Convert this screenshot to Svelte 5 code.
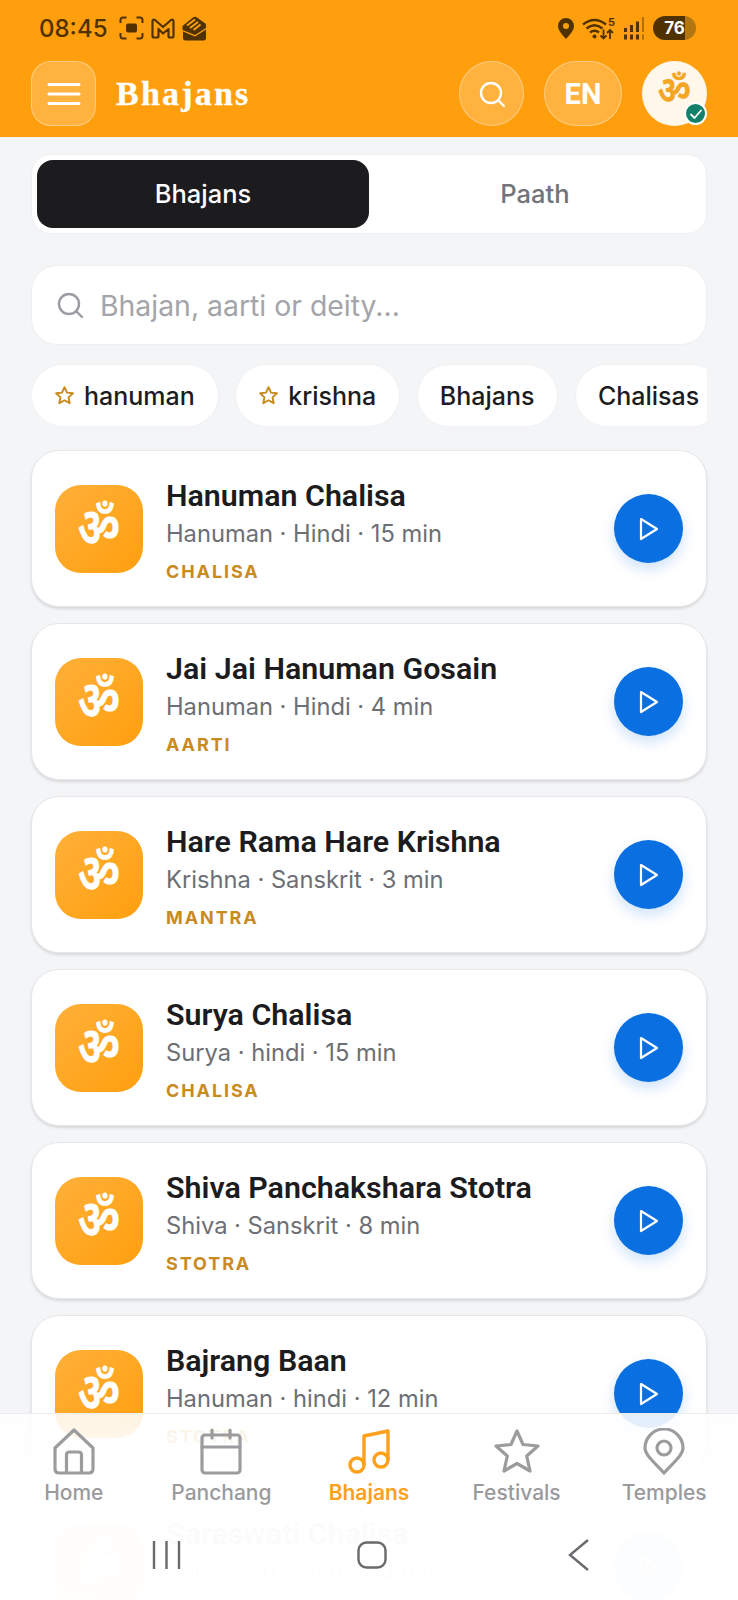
<script>
  const chips = [
    { label: "hanuman", star: true },
    { label: "krishna", star: true },
    { label: "Bhajans", star: false },
    { label: "Chalisas", star: false },
  ];
  // last card runs off the bottom of the screen, its tag line never shows
  const tracks = [
    { title: "Hanuman Chalisa", meta: "Hanuman · Hindi · 15 min", tag: "CHALISA" },
    { title: "Jai Jai Hanuman Gosain", meta: "Hanuman · Hindi · 4 min", tag: "AARTI" },
    { title: "Hare Rama Hare Krishna", meta: "Krishna · Sanskrit · 3 min", tag: "MANTRA" },
    { title: "Surya Chalisa", meta: "Surya · hindi · 15 min", tag: "CHALISA" },
    { title: "Shiva Panchakshara Stotra", meta: "Shiva · Sanskrit · 8 min", tag: "STOTRA" },
    { title: "Bajrang Baan", meta: "Hanuman · hindi · 12 min", tag: "STOTRA" },
    { title: "Saraswati Chalisa", meta: "Saraswati · hindi · 10 min", tag: "" },
  ];
  const tabs = ["Home", "Panchang", "Bhajans", "Festivals", "Temples"];
</script>

<div class="screen">
  <header class="top">
    <div class="status">
      <div class="status-left">
        <span class="clock">08:45</span>
        <svg width="25" height="24" viewBox="0 0 25 24" fill="none" stroke="#4f3200" stroke-width="2"><path d="M1.500 7V4Q1.500 1.500 4 1.500H7.500M17.500 1.500H21Q23.500 1.500 23.500 4V7M23.500 17v3Q23.500 22.500 21 22.500H17.500M7.500 22.500H4Q1.500 22.500 1.500 20V17"/><rect x="7" y="7.500" width="11" height="9" rx="2" fill="#4f3200" stroke="none"/></svg>
        <svg width="24" height="21" viewBox="0 0 24 21" fill="none" stroke="#4f3200" stroke-width="2.200" stroke-linejoin="round"><path d="M1.500 18V3.500Q1.500 1 4 2l8 7 8-7q2.500-1 2.500 1.500V18q0 1.500-1.500 1.500h-2q-1.500 0-1.500-1.500v-7L12 15.500 7.500 11v7q0 1.500-1.500 1.500H3Q1.500 19.500 1.500 18z"/></svg>
        <svg width="25" height="25" viewBox="0 0 25 25" fill="#4f3200"><path d="M0.500 10 11 1.500q2-1.500 4 0l9 6.500v4L13 19 0.500 14z"/><path d="M5 9.500l8-6M8 12l8-6M11.500 14l7-5.500" fill="none" stroke="#ff9f0e" stroke-width="2"/><path d="M1 15.500l12 5 11-7V22q0 2.500-2.500 2.500h-18Q1 24.500 1 22z"/></svg>
      </div>
      <div class="status-right">
        <svg width="16" height="21" viewBox="0 0 16 21" fill="#4f3200"><path fill-rule="evenodd" d="M8 0a8 8 0 0 1 8 8c0 4.500-4.500 9-8 13-3.500-4-8-8.500-8-13a8 8 0 0 1 8-8zm0 5a3 3 0 1 0 0 6 3 3 0 0 0 0-6z"/></svg>
        <svg width="33" height="24" viewBox="0 0 33 24" fill="none" stroke="#4f3200" stroke-width="2.400"><path d="M1 8.500q11.500-9 23 0M4.500 12.500q8-6.500 16 0M8 16.500q4.500-3.500 9 0"/><circle cx="12.500" cy="20.500" r="2" fill="#4f3200" stroke="none"/><path d="M21.500 13.500v9M18.500 19.500l3 3 3-3M28 23v-9M25 17l3-3 3 3" stroke-width="1.800"/><text x="26" y="9.500" font-size="11" font-weight="700" font-family="Inter, sans-serif" fill="#4f3200" stroke="none">5</text></svg>
        <svg width="22" height="23" viewBox="0 0 22 23" fill="#4f3200"><rect x="1" y="11" width="3" height="4"/><rect x="7" y="8" width="3" height="7"/><rect x="13" y="4.500" width="3" height="10.500"/><rect x="19" y="0" width="2" height="15" opacity=".45"/><rect x="1" y="17.500" width="3" height="5"/><rect x="7" y="17.500" width="3" height="5"/><rect x="13" y="17.500" width="3" height="5"/><rect x="19" y="17.500" width="2" height="5" opacity=".45"/></svg>
        <span class="battery"><span>76</span></span>
      </div>
    </div>
    <div class="bar">
      <button class="glass menu" aria-label="Menu">
        <svg width="34" height="24" viewBox="0 0 34 24" stroke="#fff" stroke-width="3.200" stroke-linecap="round"><path d="M2 2.500h30M2 12h30M2 21.500h30"/></svg>
      </button>
      <h1>Bhajans</h1>
      <button class="glass round" aria-label="Search">
        <svg width="28" height="28" viewBox="0 0 28 28" fill="none" stroke="#fff" stroke-width="2.400" stroke-linecap="round"><circle cx="13" cy="13" r="10"/><path d="M20.500 20.500 26 26"/></svg>
      </button>
      <button class="glass lang">EN</button>
      <div class="avatar">
        <span class="om-small">ॐ</span>
        <span class="check">
          <svg width="14" height="14" viewBox="0 0 14 14" fill="none" stroke="#fff" stroke-width="1.800" stroke-linecap="round" stroke-linejoin="round"><path d="M2 7.500 5.500 11 12 3.500"/></svg>
        </span>
      </div>
    </div>
  </header>

  <main class="content">
    <div class="seg">
      <div class="seg-item active">Bhajans</div>
      <div class="seg-item">Paath</div>
    </div>

    <div class="search">
      <svg width="28" height="28" viewBox="0 0 28 28" fill="none" stroke="#9a9ca2" stroke-width="2.400" stroke-linecap="round"><circle cx="13" cy="13" r="10"/><path d="M20.500 20.500 26 26"/></svg>
      <span>Bhajan, aarti or deity...</span>
    </div>

    <div class="chips">
      {#each chips as chip}
        <div class="chip">
          {#if chip.star}
            <svg width="21" height="21" viewBox="0 0 24 24" fill="none" stroke="#c98a1e" stroke-width="2.200" stroke-linejoin="round"><path d="M12 2.500l2.900 6.200 6.700.8-5 4.600 1.400 6.700-6-3.400-6 3.400 1.400-6.700-5-4.600 6.700-.8z"/></svg>
          {/if}
          {chip.label}
        </div>
      {/each}
    </div>

    <div class="list">
      {#each tracks as track}
        <article class="card">
          <div class="tile"><span>ॐ</span></div>
          <div class="info">
            <h2>{track.title}</h2>
            <p>{track.meta}</p>
            {#if track.tag}<span class="tag">{track.tag}</span>{/if}
          </div>
          <button class="play" aria-label="Play">
            <svg width="20" height="24" viewBox="0 0 20 24" fill="none" stroke="#fff" stroke-width="2.200" stroke-linejoin="round"><path d="M2 2 18 12 2 22z"/></svg>
          </button>
        </article>
      {/each}
    </div>
  </main>

  <nav class="dock">
    <div class="tabs">
      {#each tabs as tab, i}
        <div class="tab" class:on={i === 2}>
          {#if i === 0}
            <svg width="42" height="47" viewBox="0 0 42 47" fill="none" stroke="#9c9c9f" stroke-width="3.200" stroke-linejoin="round"><path d="M2 20 21 2l19 18v21q0 4-4 4H6q-4 0-4-4z"/><path d="M13.500 45V27q0-3 3-3h9q3 0 3 3v18"/></svg>
          {:else if i === 1}
            <svg width="42" height="47" viewBox="0 0 42 47" fill="none" stroke="#9c9c9f" stroke-width="3.200" stroke-linejoin="round" stroke-linecap="round"><rect x="2" y="7" width="38" height="38" rx="3"/><path d="M2 19h38M12 2v8M30 2v8"/></svg>
          {:else if i === 2}
            <svg width="44" height="47" viewBox="0 0 44 47" fill="none" stroke="#ffa01c" stroke-width="3.400" stroke-linejoin="round"><circle cx="10" cy="37" r="7"/><circle cx="34" cy="32" r="7"/><path d="M17 37V8l24-5v29"/></svg>
          {:else if i === 3}
            <svg width="46" height="47" viewBox="0 0 46 47" fill="none" stroke="#9c9c9f" stroke-width="3.200" stroke-linejoin="round"><path d="M23 3l6 13.500 15 1.500-11.300 10 3.300 15L23 35.500 10 43l3.300-15L2 18l15-1.500z"/></svg>
          {:else}
            <svg width="42" height="47" viewBox="0 0 42 47" fill="none" stroke="#9c9c9f" stroke-width="3.200" stroke-linejoin="round"><path d="M21 45C11 34 2 27 2 20a19 19 0 0 1 38 0c0 7-9 14-19 25z"/><circle cx="21" cy="20" r="7"/></svg>
          {/if}
          <span>{tab}</span>
        </div>
      {/each}
    </div>
    <div class="sysnav">
      <svg width="29" height="28" viewBox="0 0 29 28" stroke="#6a6a6e" stroke-width="2.400"><path d="M2 0v28M14.500 0v28M27 0v28"/></svg>
      <svg class="home-key" width="30" height="28" viewBox="0 0 30 28" fill="none" stroke="#6a6a6e" stroke-width="2.400"><rect x="1.500" y="1.500" width="27" height="25" rx="8"/></svg>
      <svg width="22" height="32" viewBox="0 0 22 32" fill="none" stroke="#6a6a6e" stroke-width="2.400"><path d="M20 1 2 16l18 15"/></svg>
    </div>
  </nav>
</div>

<style>
  :global(body) {
    margin: 0;
    background: #f4f5f7;
  }
  * { box-sizing: border-box; }

  .screen {
    position: relative;
    width: 738px;
    height: 1600px;
    overflow: hidden;
    background: #f4f5f7;
    font-family: "Inter", "Noto Sans", sans-serif;
  }

  .top {
    background: #ff9f0e;
    height: 137px;
    padding: 0 31px;
  }
  .status {
    height: 61px;
    display: flex;
    align-items: center;
    justify-content: space-between;
    padding: 0 11px 5px 8px;
  }
  .status-left, .status-right { display: flex; align-items: center; gap: 7px; }
  .status-right { gap: 8px; }
  .clock { font-size: 24px; font-weight: 500; color: #4f3200; margin-right: 5px; }
  .battery {
    width: 43px; height: 24px; border-radius: 12px;
    background: linear-gradient(90deg, #4f3200 74%, #b27510 74%);
    color: #fff; font-size: 17px; font-weight: 700;
    display: flex; align-items: center; justify-content: center;
  }

  .bar { display: flex; align-items: center; height: 65px; }
  .glass {
    height: 65px;
    background: rgba(255, 255, 255, .2);
    border: 1.500px solid rgba(255, 255, 255, .35);
    color: #fff;
    display: flex; align-items: center; justify-content: center;
    padding: 0;
  }
  .menu { width: 65px; border-radius: 20px; }
  h1 {
    flex: 1;
    margin: 0 0 0 20px;
    font: 700 34px "Liberation Serif", serif;
    letter-spacing: 2.200px;
    -webkit-text-stroke: .3px #fff;
    color: #fff;
  }
  .round { width: 65px; border-radius: 50%; margin-left: 1px; }
  .lang {
    width: 78px; margin-left: 20px; border-radius: 33px;
    font: 700 29px "Roboto", sans-serif;
  }
  .avatar {
    position: relative;
    width: 65px; height: 65px; margin-left: 20px;
    border-radius: 50%;
    background: #fff8ea;
    display: flex; align-items: center; justify-content: center;
  }
  .om-small {
    display: inline-block;
    font-size: 33px; font-weight: 700; color: #f5a524;
    transform: translateY(-5px) scale(1, 1.15);
  }
  .check {
    position: absolute; right: 0; bottom: 1px;
    width: 23px; height: 23px; border-radius: 50%;
    background: #12806a; border: 2px solid #fff;
    display: flex; align-items: center; justify-content: center;
  }

  .content { padding: 17px 31px 0; }

  .seg {
    display: flex;
    height: 80px; padding: 5px;
    background: #fff;
    border: 1px solid #eeeff1;
    border-radius: 20px;
  }
  .seg-item {
    flex: 1; border-radius: 16px;
    display: flex; align-items: center; justify-content: center;
    font-size: 25.500px; font-weight: 500; color: #737478;
    padding-bottom: 1px;
  }
  .seg-item.active { background: #1c1c1e; color: #fff; }

  .search {
    margin-top: 31px;
    height: 80px;
    background: #fff;
    border: 1px solid #eeeff1;
    border-radius: 26px;
    display: flex; align-items: center; gap: 16px;
    padding: 0 24px;
    font-size: 28.400px; color: #a3a5aa;
  }

  .chips {
    margin-top: 19px;
    display: flex; gap: 16.500px;
    overflow: hidden;
  }
  .chip {
    flex-shrink: 0;
    height: 63px; padding: 0 23px 0 22px;
    background: #fff;
    border: 1px solid #f0f1f3;
    border-radius: 32px;
    display: flex; align-items: center; gap: 9px;
    font-size: 25px; font-weight: 500; color: #1c1c1e;
  }

  .list { margin-top: 23px; display: flex; flex-direction: column; gap: 16px; }
  .card {
    height: 157px;
    background: #fff;
    border: 1px solid #e6e7ea;
    border-radius: 28px;
    box-shadow: 0 2px 3px rgba(0, 0, 0, .12);
    display: flex; align-items: center;
    padding: 0 23px;
  }
  .tile {
    width: 88px; height: 88px; flex-shrink: 0;
    border-radius: 26px;
    background: linear-gradient(135deg, #ffb03a, #ff9f0e);
    color: #fff; font-size: 42px; font-weight: 700;
    display: flex; align-items: center; justify-content: center;
  }
  .tile span { display: inline-block; transform: translateY(-4px) scale(1, 1.28); }
  .info { flex: 1; align-self: flex-start; margin-left: 23px; padding-top: 27.500px; }
  h2 {
    margin: 0;
    font: 600 30.400px/34px "Roboto", sans-serif;
    color: #1c1c1e;
  }
  p {
    margin: 6px 0 0;
    font-size: 23.700px; line-height: 30px; color: #6d6f74;
  }
  .tag {
    display: block; margin-top: 12px;
    font-size: 18px; line-height: 22px; font-weight: 700;
    letter-spacing: 1.900px; color: #c98a1e;
  }
  .play {
    width: 69px; height: 69px; flex-shrink: 0;
    border: 0; border-radius: 50%; padding: 0;
    background: #0a6fe0;
    box-shadow: 0 6px 14px rgba(10, 111, 224, .2);
    display: flex; align-items: center; justify-content: center;
  }

  .dock {
    position: absolute; left: 0; right: 0; bottom: 0;
    height: 187px;
    background: linear-gradient(rgba(255, 255, 255, .88), rgba(255, 255, 255, .98) 40%, rgba(255, 255, 255, .99));
    border-top: 1px solid #ececee;
  }
  .tabs { display: grid; grid-template-columns: repeat(5, 1fr); padding-top: 14px; }
  .tab {
    display: flex; flex-direction: column; align-items: center; gap: 5px;
    font-size: 21px; font-weight: 500; color: #9a9a9d;
  }
  .tab.on { color: #ffa01c; font-weight: 600; }
  .sysnav {
    position: absolute; left: 152px; right: 148px; top: 125px;
    display: flex; justify-content: space-between; align-items: center;
  }
  .home-key { margin-right: 6px; }
</style>
